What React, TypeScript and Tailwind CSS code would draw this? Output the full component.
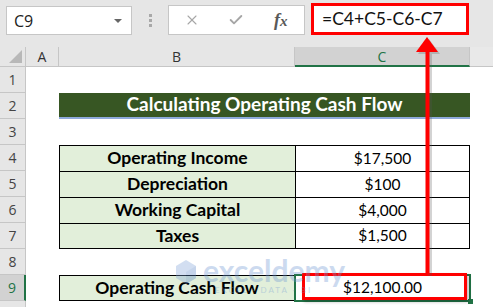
import { X, Check } from 'lucide-react';

const rows = [
  { n: 1 },
  { n: 2 },
  { n: 3 },
  { n: 4, label: 'Operating Income', value: '$17,500', first: true },
  { n: 5, label: 'Depreciation', value: '$100' },
  { n: 6, label: 'Working Capital', value: '$4,000' },
  { n: 7, label: 'Taxes', value: '$1,500', last: true },
  { n: 8 },
  { n: 9 },
  { n: 10 },
];

const sans = "font-['Open_Sans','Noto_Sans',sans-serif]";
const cellFont = "font-['Lato','Carlito','Liberation_Sans',sans-serif]";

function RowHeader({ n, selected }: { n: number; selected?: boolean }) {
  return (
    <div
      className={`flex items-center justify-center border-b border-r text-[14px] ${sans} ${
        selected
          ? 'bg-[#d2d2d2] text-[#217346] border-r-2 border-r-[#217346] border-b-[#c6c6c6]'
          : 'bg-[#e6e6e6] text-[#444] border-[#c6c6c6]'
      }`}
    >
      {n < 10 ? n : ''}
    </div>
  );
}

export default function App() {
  return (
    <div className="relative w-[493px] h-[307px] overflow-hidden bg-white">
      {/* Formula bar */}
      <div className="flex h-[47px] items-start bg-[#e6e6e6]">
        <div className={`ml-[6px] mt-[6px] flex h-[29px] w-[126px] items-center justify-between border border-[#c6c6c6] bg-white pl-[7px] pr-[9px] text-[16px] text-[#222] ${sans}`}>
          <span>C9</span>
          <span className="h-0 w-0 border-x-[4px] border-t-[4px] border-x-transparent border-t-[#666]" />
        </div>
        <div className="ml-[17px] mt-[14px] flex flex-col gap-[2px]">
          <span className="h-[3px] w-[3px] bg-[#a8a8a8]" />
          <span className="h-[3px] w-[3px] bg-[#a8a8a8]" />
          <span className="h-[3px] w-[3px] bg-[#a8a8a8]" />
        </div>
        <div className="ml-[16px] mt-[5px] flex h-[30px] w-[137px] items-center border border-[#c6c6c6] bg-white">
          <X size={16} strokeWidth={1.6} className="ml-[15px] text-[#a6a6a6]" />
          <Check size={16} strokeWidth={2.8} className="ml-[28px] text-[#a6a6a6]" />
          <span className="ml-[30px] font-['Liberation_Serif',serif] text-[18px] italic font-bold text-[#595959]">
            f<span className="text-[15px]">x</span>
          </span>
        </div>
        <div className={`ml-[6px] mt-[3px] flex h-[32px] w-[158px] items-center border-[3px] border-[#ff0000] bg-white pl-[8px] text-[17.5px] text-[#111] ${cellFont}`}>
          =C4+C5-C6-C7
        </div>
      </div>

      {/* Sheet */}
      <div className="grid grid-cols-[26px_33px_236px_175px_23px] grid-rows-[20px_repeat(10,26px)]">
        {/* column headers */}
        <div className="relative border-b border-r border-[#c6c6c6] bg-[#e6e6e6]">
          <div className="absolute bottom-[3px] right-[3px] h-0 w-0 border-b-[13px] border-l-[13px] border-b-[#b8b8b8] border-l-transparent" />
        </div>
        <div className={`flex items-center justify-center border-b border-r border-[#c6c6c6] bg-[#e6e6e6] text-[14px] text-[#333] ${sans}`}>A</div>
        <div className={`flex items-center justify-center border-b border-r border-[#c6c6c6] bg-[#e6e6e6] text-[14px] text-[#333] ${sans}`}>B</div>
        <div className={`flex items-center justify-center border-b-2 border-r border-b-[#217346] border-r-[#c6c6c6] bg-[#d2d2d2] text-[14px] text-[#217346] ${sans}`}>C</div>
        <div className="border-b border-[#c6c6c6] bg-[#e9e9e9]" />

        {rows.map((r) => {
          if (r.n === 2) {
            return [
              <RowHeader key="h2" n={2} />,
              <div key="a2" />,
              <div
                key="t2"
                className={`col-span-2 flex items-center justify-center border-b-2 border-[#8eaadb] bg-[#375623] pb-[1px] text-[19px] font-bold text-white ${cellFont}`}
              >
                Calculating Operating Cash Flow
              </div>,
              <div key="d2" />,
            ];
          }
          if (r.label) {
            return [
              <RowHeader key={`h${r.n}`} n={r.n} />,
              <div key={`a${r.n}`} />,
              <div
                key={`b${r.n}`}
                className={`flex items-center justify-center border-l border-t border-black bg-[#e2efda] text-[17.5px] font-bold text-black ${cellFont} ${r.last ? 'border-b' : ''}`}
              >
                {r.label}
              </div>,
              <div
                key={`c${r.n}`}
                className={`flex items-center justify-center border-l border-r border-t border-black text-[15.5px] text-black ${cellFont} ${r.last ? 'border-b' : ''}`}
              >
                {r.value}
              </div>,
              <div key={`d${r.n}`} />,
            ];
          }
          if (r.n === 9) {
            return [
              <RowHeader key="h9" n={9} selected />,
              <div key="a9" />,
              <div
                key="b9"
                className={`flex items-center justify-center border border-black bg-[#e2efda] text-[17.5px] font-bold text-black ${cellFont}`}
              >
                Operating Cash Flow
              </div>,
              <div key="c9" className={`relative flex items-center justify-center text-[15.5px] text-black ${cellFont}`}>
                <div className="absolute -left-[1px] -top-[1px] -bottom-[1px] -right-[1px] border-2 border-[#217346]" />
                <div className="absolute -bottom-[3px] -right-[3px] h-[5px] w-[5px] bg-[#217346]" />
                <div className="absolute left-[7px] -top-[2px] h-[27px] w-[165px] border-[3px] border-[#ff0000] shadow-[2px_2px_3px_rgba(0,0,0,0.25)]" />
                <span className="relative">$12,100.00</span>
              </div>,
              <div key="d9" />,
            ];
          }
          return [
            <RowHeader key={`h${r.n}`} n={r.n} />,
            <div key={`a${r.n}`} />,
            <div key={`b${r.n}`} />,
            <div key={`c${r.n}`} />,
            <div key={`d${r.n}`} />,
          ];
        })}
      </div>

      {/* watermark */}
      <div className="pointer-events-none absolute left-[175px] top-[256px] flex items-start gap-[6px] opacity-35">
        <svg width="22" height="26" viewBox="0 0 22 26" className="mt-[3px]">
          <path d="M11 1 L21 7 L21 19 L11 25 L1 19 L1 7 Z" fill="#7fa3d8" />
          <path d="M11 13 L21 7 L21 19 L11 25 Z" fill="#5b86c8" />
        </svg>
        <div className="flex flex-col">
          <span className="font-['Lato',sans-serif] text-[30px] font-bold leading-[28px] text-[#6f98d4]">exceldemy</span>
          <span className="ml-[12px] font-['Lato',sans-serif] text-[8px] tracking-[2px] text-[#6f98d4]">EXCEL · DATA · BI</span>
        </div>
      </div>

      {/* red arrow */}
      <svg className="pointer-events-none absolute left-0 top-0" width="493" height="307">
        <g opacity="0.25" transform="translate(2,2)">
          <polygon points="427,37 416,52 438,52" fill="#555" />
          <rect x="426" y="50" width="4" height="224" fill="#555" />
        </g>
        <polygon points="427,37 416,52 438,52" fill="#ff0000" />
        <rect x="425.5" y="50" width="4" height="224" fill="#ff0000" />
      </svg>
    </div>
  );
}
